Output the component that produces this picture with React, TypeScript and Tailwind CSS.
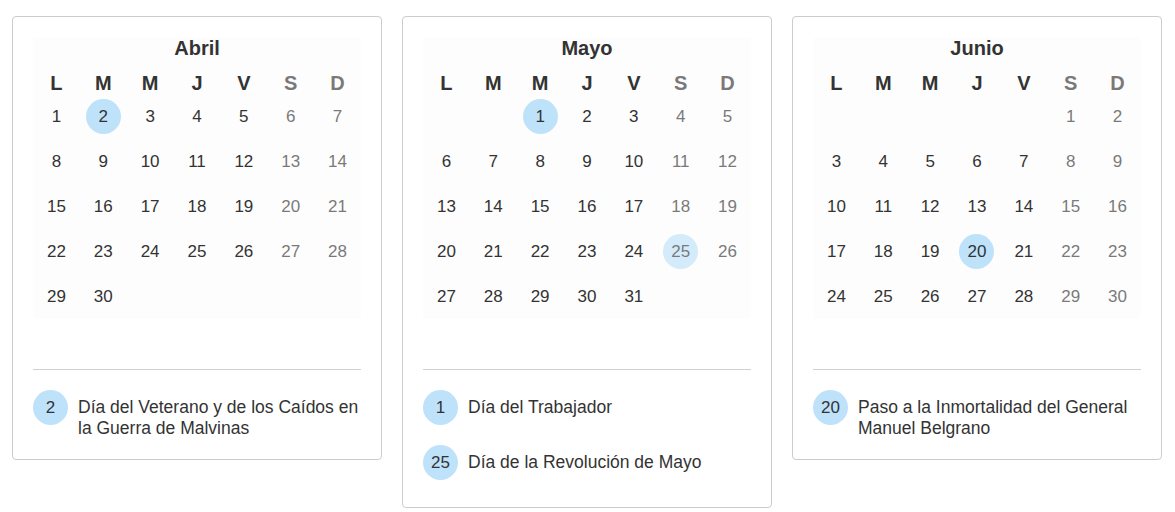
import React from 'react'

type Holiday = { day: number; name: string }

type Month = {
  name: string
  offset: number
  days: number
  holidays: Holiday[]
}

const months: Month[] = [
  {
    name: 'Abril',
    offset: 0,
    days: 30,
    holidays: [{ day: 2, name: 'Día del Veterano y de los Caídos en la Guerra de Malvinas' }],
  },
  {
    name: 'Mayo',
    offset: 2,
    days: 31,
    holidays: [
      { day: 1, name: 'Día del Trabajador' },
      { day: 25, name: 'Día de la Revolución de Mayo' },
    ],
  },
  {
    name: 'Junio',
    offset: 5,
    days: 30,
    holidays: [{ day: 20, name: 'Paso a la Inmortalidad del General Manuel Belgrano' }],
  },
]

const weekdays = ['L', 'M', 'M', 'J', 'V', 'S', 'D']

function MonthCard({ month }: { month: Month }) {
  const cells: (number | null)[] = []
  for (let i = 0; i < month.offset; i++) cells.push(null)
  for (let d = 1; d <= month.days; d++) cells.push(d)
  const marked = month.holidays.map((h) => h.day)

  return (
    <div className="w-[370px] rounded border border-[#cccccc] bg-white p-5">
      <div className="rounded bg-[#fdfdfd]">
        <div className="text-center text-[20px] font-bold leading-[22px] text-[#333]">{month.name}</div>
        <div className="grid h-[35px] grid-cols-7 items-end">
          {weekdays.map((w, i) => (
            <div
              key={i}
              className={`text-center text-[20px] font-bold leading-[22px] text-[#333] ${i > 4 ? 'opacity-[0.65]' : ''}`}
            >
              {w}
            </div>
          ))}
        </div>
        <div className="grid grid-cols-7">
          {cells.map((d, i) => (
            <div
              key={i}
              className={`flex h-[45px] items-center justify-center ${i % 7 > 4 ? 'opacity-[0.65]' : ''}`}
            >
              {d !== null && (
                <span
                  className={`flex h-[35px] w-[35px] items-center justify-center rounded-full text-[17px] text-[#333] ${
                    marked.includes(d) ? 'bg-[#bfe2fb]' : ''
                  }`}
                >
                  {d}
                </span>
              )}
            </div>
          ))}
        </div>
      </div>
      <div className="mt-[50px] border-t border-[#d0d0d0] pt-5">
        <div className="flex flex-col gap-[13px]">
          {month.holidays.map((h) => (
            <div key={h.day} className="flex min-h-[42px] items-start gap-[10px]">
              <span className="flex h-[35px] w-[35px] shrink-0 items-center justify-center rounded-full bg-[#bfe2fb] text-[17px] text-[#333]">
                {h.day}
              </span>
              <span className="pt-[7px] text-[17.5px] leading-[21px] text-[#333]">{h.name}</span>
            </div>
          ))}
        </div>
      </div>
    </div>
  )
}

export default function App() {
  return (
    <div
      className="flex min-h-[512px] items-start gap-5 bg-white pl-3 pt-4"
      style={{ fontFamily: '"Liberation Sans", Arial, sans-serif' }}
    >
      {months.map((m) => (
        <MonthCard key={m.name} month={m} />
      ))}
    </div>
  )
}
